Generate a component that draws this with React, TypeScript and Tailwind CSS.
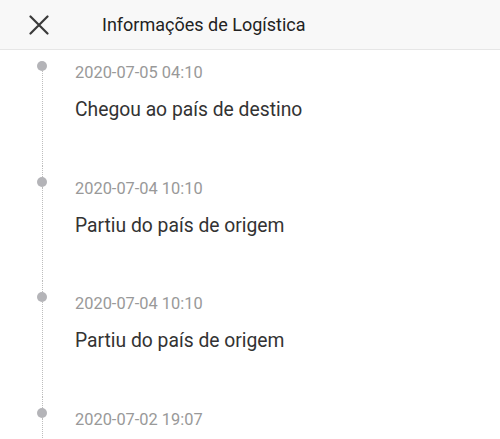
const EVENTS = [
  { time: '2020-07-05 04:10', text: 'Chegou ao país de destino' },
  { time: '2020-07-04 10:10', text: 'Partiu do país de origem' },
  { time: '2020-07-04 10:10', text: 'Partiu do país de origem' },
  { time: '2020-07-02 19:07', text: '' },
];

function CloseIcon() {
  return (
    <svg width="20" height="20" viewBox="0 0 20 20" fill="none" stroke="#3a3a3a" strokeWidth="2.2" strokeLinecap="round">
      <path d="M1.5 1.5 18.5 18.5M18.5 1.5 1.5 18.5" />
    </svg>
  );
}

export default function App() {
  return (
    <div className="h-[439px] w-[500px] overflow-hidden bg-white font-['Roboto',sans-serif]">
      <header className="flex h-[50px] items-center border-b border-[#e6e6e6] bg-[#f8f8f8]">
        <button type="button" aria-label="Fechar" className="ml-[29px] flex h-5 w-5 items-center justify-center">
          <CloseIcon />
        </button>
        <h1 className="ml-[53px] text-[18px] leading-6 text-[#222]">Informações de Logística</h1>
      </header>

      <ol>
        {EVENTS.map((ev, i) => (
          <li key={i} className="flex h-[115.5px]">
            <div className="ml-[37px] flex w-[10px] flex-col items-center">
              <div className={`h-[11px] border-l border-dotted ${i === 0 ? 'border-transparent' : 'border-[#bdbdbd]'}`} />
              <div className="h-[10px] w-[10px] rounded-full bg-[#b4b4b8]" />
              <div className="flex-1 border-l border-dotted border-[#bdbdbd]" />
            </div>
            <div className="ml-[28px] pt-[13px]">
              <div className="text-[16.4px] leading-5 text-[#999]">{ev.time}</div>
              {ev.text && <div className="mt-[15px] text-[19.3px] leading-6 text-[#333]">{ev.text}</div>}
            </div>
          </li>
        ))}
      </ol>
    </div>
  );
}
